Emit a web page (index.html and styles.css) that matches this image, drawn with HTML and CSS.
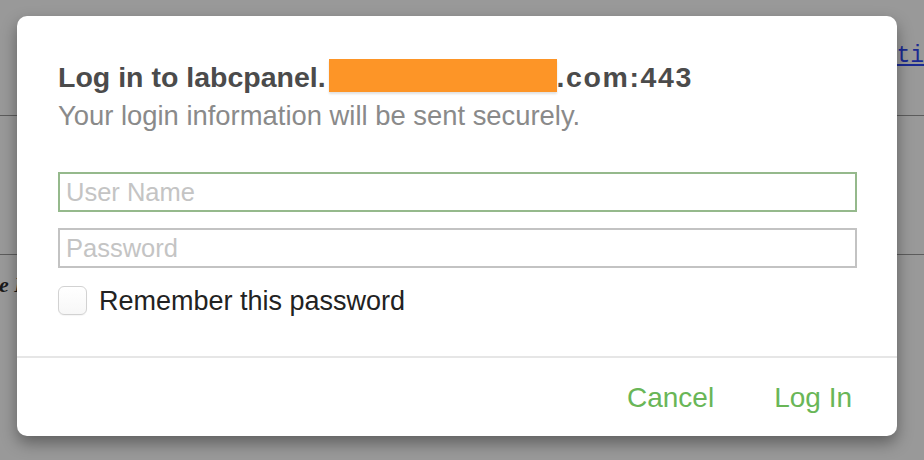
FILE: index.html
```html
<!DOCTYPE html>
<html lang="en">
<head>
<meta charset="utf-8">
<title>Log in</title>
<link rel="stylesheet" href="styles.css">
</head>
<body>
<div class="page">
  <div class="page-top"><a class="page-link" href="#">ti</a></div>
  <div class="page-rule"></div>
  <div class="page-mid"></div>
  <div class="page-rule"></div>
  <p class="page-text">e I</p>
</div>

<div class="dialog" role="dialog">
  <div class="dialog-body">
    <h1 class="title">Log in to labcpanel.<span class="redact"></span><span class="tld">.com:443</span></h1>
    <p class="subtitle">Your login information will be sent securely.</p>
    <div class="field field-focus"><span class="placeholder">User Name</span></div>
    <div class="field"><span class="placeholder">Password</span></div>
    <label class="remember"><span class="checkbox"></span><span class="remember-text">Remember this password</span></label>
  </div>
  <div class="dialog-footer">
    <button class="btn">Cancel</button>
    <button class="btn">Log In</button>
  </div>
</div>
</body>
</html>
```
FILE: styles.css
```css
html, body {
  margin: 0;
  padding: 0;
  width: 924px;
  height: 460px;
  overflow: hidden;
  background: #999999;
}

.page {
  width: 924px;
  height: 460px;
}

.page-top {
  height: 115px;
  box-sizing: border-box;
  padding-top: 44px;
  display: flex;
  justify-content: flex-end;
  overflow: hidden;
}

.page-link {
  font-family: "Liberation Mono", monospace;
  font-size: 23px;
  line-height: 24px;
  color: #1b2a92;
  text-decoration: underline;
}

.page-rule {
  height: 1px;
  background: #5c5c5c;
}

.page-mid {
  height: 138px;
}

.page-text {
  margin: 18px 0 0 -1px;
  font-family: "Liberation Serif", serif;
  font-style: italic;
  font-weight: bold;
  font-size: 22px;
  line-height: 24px;
  color: #1a1a1a;
}

.dialog {
  position: absolute;
  left: 17px;
  top: 16px;
  width: 880px;
  height: 420px;
  background: #ffffff;
  border-radius: 10px;
  box-shadow: 0 7px 16px rgba(0, 0, 0, 0.38);
  display: flex;
  flex-direction: column;
  font-family: "Liberation Sans", Arial, sans-serif;
}

.dialog-body {
  padding: 43px 40px 0 41px;
  height: 342px;
  box-sizing: border-box;
  border-bottom: 2px solid #e6e6e6;
}

.title {
  margin: 0;
  font-size: 28.5px;
  line-height: 34px;
  font-weight: bold;
  color: #4b4b4b;
  white-space: nowrap;
}

.tld {
  letter-spacing: 1.6px;
}

.redact {
  display: inline-block;
  width: 228px;
  height: 33px;
  margin-left: 3px;
  vertical-align: -5px;
  background: #fd9527;
  box-shadow: 0 2px 2px rgba(0, 0, 0, 0.12);
}

.subtitle {
  margin: 6px 0 0;
  font-size: 27.4px;
  line-height: 32px;
  color: #8a8a8a;
  white-space: nowrap;
}

.field {
  margin-top: 40px;
  height: 40px;
  box-sizing: border-box;
  border: 2px solid #c3c3c3;
  padding: 0 6px;
  display: flex;
  align-items: center;
}

.field + .field {
  margin-top: 16px;
}

.field-focus {
  border-color: #95b98c;
}

.placeholder {
  font-size: 25.5px;
  line-height: 36px;
  color: #c4c4c4;
}

.remember {
  margin-top: 18px;
  display: flex;
  align-items: center;
  gap: 12px;
}

.checkbox {
  width: 27px;
  height: 27px;
  border: 1px solid #d2d2d2;
  border-radius: 6px;
  background: linear-gradient(#ffffff, #f7f7f7);
  box-shadow: 0 1px 1px rgba(0, 0, 0, 0.04);
}

.remember-text {
  font-size: 27px;
  line-height: 28px;
  padding-top: 1px;
  color: #222222;
}

.dialog-footer {
  flex: 1;
  display: flex;
  justify-content: flex-end;
  align-items: flex-start;
  gap: 60px;
  padding: 23px 45px 0 0;
}

.btn {
  margin: 0;
  padding: 0;
  border: 0;
  background: none;
  font-family: "Liberation Sans", Arial, sans-serif;
  font-size: 28px;
  line-height: 34px;
  color: #69b657;
  cursor: pointer;
}
```
